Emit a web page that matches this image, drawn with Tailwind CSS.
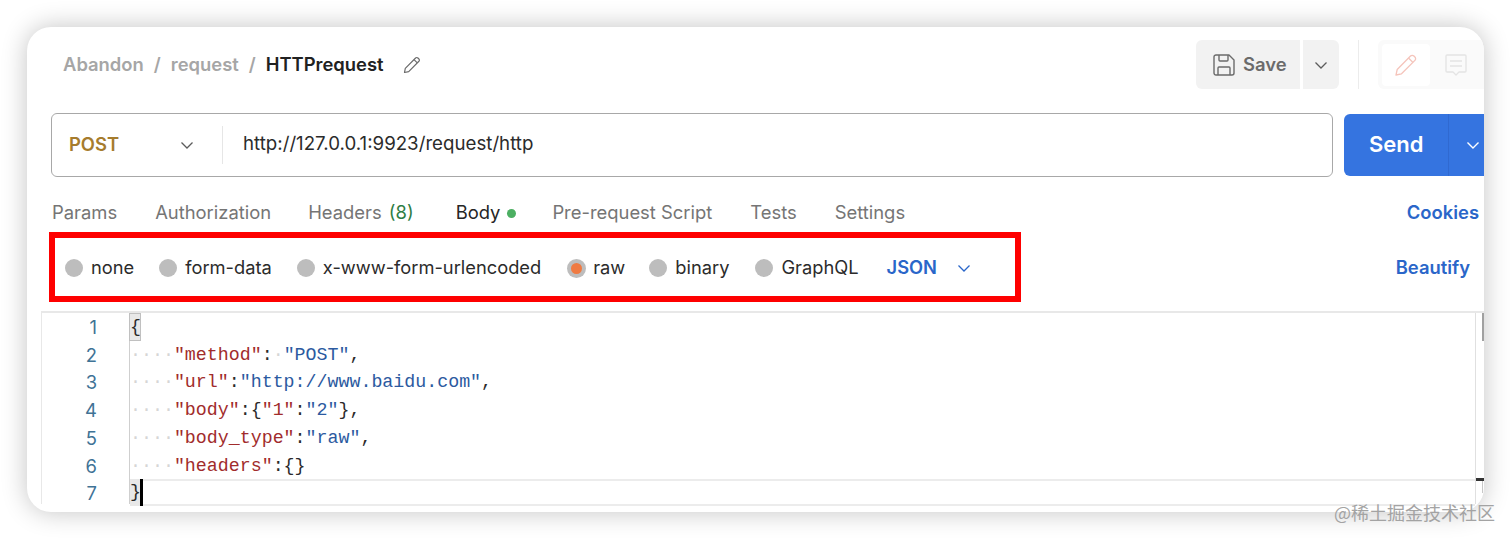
<!DOCTYPE html>
<html lang="en">
<head>
    <meta charset="UTF-8">
    <title>HTTPrequest</title>
    <script src="https://cdn.jsdelivr.net/npm/@tailwindcss/browser@4"></script>
</head>
<body class="bg-white h-[539px] overflow-hidden font-['Inter',sans-serif] relative">
    <div class="ml-[27px] mt-[27px] w-[1457px] h-[485px] bg-white rounded-[24px] shadow-[0_0_26px_rgba(0,0,0,0.24)] overflow-hidden relative">
        <!-- Header -->
        <div class="flex items-center h-[49px] mt-[13px] pl-[36px]">
            <div class="flex items-center text-[18.4px] font-semibold text-[#a6a6a6]">
                <span>Abandon</span>
                <span class="ml-[10px]">/</span>
                <span class="ml-[10px]">request</span>
                <span class="ml-[10px]">/</span>
                <span class="ml-[10px] text-[#212121]">HTTPrequest</span>
            </div>
            <svg class="ml-[19px] w-[18px] h-[18px] text-[#6b6b6b]" viewBox="0 0 18 18" fill="none" stroke="currentColor" stroke-width="1.2" stroke-linejoin="round"><path d="M1.5 16.5l.8-4.2L12.6 2a1.6 1.6 0 0 1 2.3 0l1 1a1.6 1.6 0 0 1 0 2.3L5.7 15.6l-4.2.9z"/><path d="M11 3.6l3.3 3.3"/></svg>
            <div class="ml-auto flex items-center h-[49px]">
                <div class="flex items-center w-[104px] h-full bg-[#f2f2f2] rounded-l-[6px] pl-[17px] gap-[8px] text-[18.4px] font-semibold text-[#6b6b6b]">
                    <svg class="w-[22px] h-[22px]" viewBox="0 0 22 22" fill="none" stroke="#6b6b6b" stroke-width="1.4" stroke-linejoin="round"><path d="M1 3a2 2 0 0 1 2-2h13l5 5v13a2 2 0 0 1-2 2H3a2 2 0 0 1-2-2z"/><path d="M6 1v5a1 1 0 0 0 1 1h7a1 1 0 0 0 1-1V1"/><path d="M5 21v-7a1 1 0 0 1 1-1h10a1 1 0 0 1 1 1v7"/></svg>
                    <span>Save</span>
                </div>
                <div class="flex items-center justify-center w-[36px] h-full ml-[3px] bg-[#f2f2f2] rounded-r-[6px]">
                    <svg class="w-[14px] h-[14px]" viewBox="0 0 14 14" fill="none" stroke="#5c5c5c" stroke-width="1.3"><path d="M1.5 4.5L7 10l5.5-5.5"/></svg>
                </div>
                <div class="w-px h-full bg-[#ececec] ml-[19px]"></div>
                <div class="flex items-center w-[106px] h-full ml-[19px] bg-[#fafafa] rounded-l-[6px]">
                    <div class="flex items-center justify-center w-[48px] h-[42px] ml-[4px] bg-white rounded-[4px]">
                        <svg class="w-[22px] h-[22px]" viewBox="0 0 22 22" fill="none" stroke="#f5c4bb" stroke-width="1.3" stroke-linejoin="round"><path d="M1 21l1.2-5.5L15.5 2a2.4 2.4 0 0 1 3.4 0l1 1a2.4 2.4 0 0 1 0 3.4L6.5 19.8z"/><path d="M13.5 4l4.5 4.5"/></svg>
                    </div>
                    <svg class="ml-[15px] w-[22px] h-[22px]" viewBox="0 0 22 22" fill="none" stroke="#e4e4e4" stroke-width="1.3" stroke-linejoin="round"><path d="M1 2a1 1 0 0 1 1-1h18a1 1 0 0 1 1 1v15a1 1 0 0 1-1 1h-6l-3 3-3-3H2a1 1 0 0 1-1-1z"/><path d="M5 7h12M5 12h12"/></svg>
                </div>
            </div>
        </div>

        <!-- Url bar -->
        <div class="flex items-center mt-[24px] pl-[24px] h-[64px]">
            <div class="flex items-center w-[1283px] h-full border border-[#a8a8a8] rounded-[6px]">
                <div class="flex items-center w-[171px] pl-[17px] h-[38px] border-r border-[#e6e6e6]">
                    <span class="text-[18.4px] font-semibold text-[#a67c2d] w-[111px]">POST</span>
                    <svg class="w-[14px] h-[14px]" viewBox="0 0 14 14" fill="none" stroke="#5c5c5c" stroke-width="1.3"><path d="M1.5 4.5L7 10l5.5-5.5"/></svg>
                </div>
                <span class="ml-[20px] -mt-[2px] text-[18.7px] text-[#2b2b2b]">http://127.0.0.1:9923/request/http</span>
            </div>
            <div class="flex items-center h-[62px] w-[140px] ml-[11px] bg-[#3574e0] rounded-l-[6px] text-white shrink-0">
                <span class="ml-[25px] w-[79px] -mt-[1px] text-[22px] font-semibold">Send</span>
                <div class="w-px h-full bg-[#3069d0]"></div>
                <svg class="ml-[17px] w-[14px] h-[14px]" viewBox="0 0 14 14" fill="none" stroke="#fff" stroke-width="1.4"><path d="M1.5 4.5L7 10l5.5-5.5"/></svg>
            </div>
        </div>

        <!-- Tabs -->
        <div class="flex items-center h-[24px] mt-[24px] pl-[25px] pr-[5px] text-[18.4px] text-[#757575]">
            <span>Params</span>
            <span class="ml-[38px]">Authorization</span>
            <span class="ml-[37px]">Headers <span class="text-[#2f7d45] ml-[2px]">(8)</span></span>
            <span class="ml-[42px] text-[#262626]">Body</span>
            <span class="ml-[7px] w-[9px] h-[9px] rounded-full bg-[#4caf62]"></span>
            <span class="ml-[36px]">Pre-request Script</span>
            <span class="ml-[38px]">Tests</span>
            <span class="ml-[38px]">Settings</span>
            <span class="ml-auto font-semibold text-[#2a66c9]">Cookies</span>
        </div>

        <!-- Body types -->
        <div class="flex items-center mt-[7px] pr-[14px]">
            <div class="flex items-center w-[972px] h-[70px] ml-[22px] border-[6px] border-[#fe0000] pl-[10px] pt-[2px] text-[18.3px] text-[#2b2b2b]">
                <span class="w-[18px] h-[18px] rounded-full bg-[#bdbdbd]"></span>
                <span class="ml-[8px]">none</span>
                <span class="ml-[25px] w-[18px] h-[18px] rounded-full bg-[#bdbdbd]"></span>
                <span class="ml-[8px]">form-data</span>
                <span class="ml-[25px] w-[18px] h-[18px] rounded-full bg-[#bdbdbd]"></span>
                <span class="ml-[8px]">x-www-form-urlencoded</span>
                <span class="ml-[26px] w-[19px] h-[19px] rounded-full bg-[#bdbdbd] flex items-center justify-center"><span class="w-[11px] h-[11px] rounded-full bg-[#ef7a42]"></span></span>
                <span class="ml-[7px]">raw</span>
                <span class="ml-[24px] w-[18px] h-[18px] rounded-full bg-[#bdbdbd]"></span>
                <span class="ml-[8px]">binary</span>
                <span class="ml-[26px] w-[18px] h-[18px] rounded-full bg-[#bdbdbd]"></span>
                <span class="ml-[8px]">GraphQL</span>
                <span class="ml-[28px] font-semibold text-[#2a66c9]">JSON</span>
                <svg class="ml-[20px] w-[14px] h-[14px]" viewBox="0 0 14 14" fill="none" stroke="#2a66c9" stroke-width="1.3"><path d="M1.5 4.5L7 10l5.5-5.5"/></svg>
            </div>
            <span class="ml-auto pt-[2px] text-[18.4px] font-semibold text-[#2a66c9]">Beautify</span>
        </div>

        <!-- Editor -->
        <div class="flex mt-[9px] ml-[14px] border-t-2 border-l border-[#e8e8e8] h-[193px] font-['Liberation_Mono',monospace] text-[18.3px] leading-[27.7px]">
            <div class="w-[87px] pr-[32px] pt-[1px] shrink-0 text-right font-['Inter',sans-serif] text-[18.4px] text-[#3f7396]">
                <div>1</div><div>2</div><div>3</div><div>4</div><div>5</div><div>6</div><div>7</div>
            </div>
            <div class="flex-1 pt-[1px] border-l border-[#cfcfcf] text-[#2b2b2b]">
                <div class="whitespace-pre"><span class="inline-block w-[10px] leading-[26px] bg-[#e8e8e8] outline outline-1 outline-[#c0c0c0]">{</span></div>
                <div class="whitespace-pre"><span class="text-[#d6d6d6]">····</span><span class="text-[#a12c2c]">"method"</span>:<span class="text-[#d6d6d6]">·</span><span class="text-[#2c5aa0]">"POST"</span>,</div>
                <div class="whitespace-pre"><span class="text-[#d6d6d6]">····</span><span class="text-[#a12c2c]">"url"</span>:<span class="text-[#2c5aa0]">"http://www.baidu.com"</span>,</div>
                <div class="whitespace-pre"><span class="text-[#d6d6d6]">····</span><span class="text-[#a12c2c]">"body"</span>:{<span class="text-[#a12c2c]">"1"</span>:<span class="text-[#2c5aa0]">"2"</span>},</div>
                <div class="whitespace-pre"><span class="text-[#d6d6d6]">····</span><span class="text-[#a12c2c]">"body_type"</span>:<span class="text-[#2c5aa0]">"raw"</span>,</div>
                <div class="whitespace-pre"><span class="text-[#d6d6d6]">····</span><span class="text-[#a12c2c]">"headers"</span>:{}</div>
                <div class="flex h-[27px] -mt-[1px] border-y-2 border-[#ececec]"><span class="w-[10px] h-[27px] -mt-[2px] leading-[27px] bg-[#e8e8e8]">}</span><span class="w-[3px] h-[27px] -mt-[2px] bg-black"></span></div>
            </div>
            <div class="w-[9px] border-l border-[#e0e0e0] shrink-0">
                <div class="ml-[6px] w-[2px] h-[28px] bg-[#a0a0a0]"></div>
                <div class="mt-[137px] w-[9px] h-[3px] bg-[#333333]"></div>
                <div class="ml-[6px] w-px h-[12px] bg-[#c8c8c8]"></div>
            </div>
        </div>
    </div>
    <span class="absolute left-[1334px] top-[501px] text-[18px] text-[#a3a3a3] font-['Noto_Sans_CJK_SC',sans-serif] leading-[22px]">@稀土掘金技术社区</span>
</body>
</html>
